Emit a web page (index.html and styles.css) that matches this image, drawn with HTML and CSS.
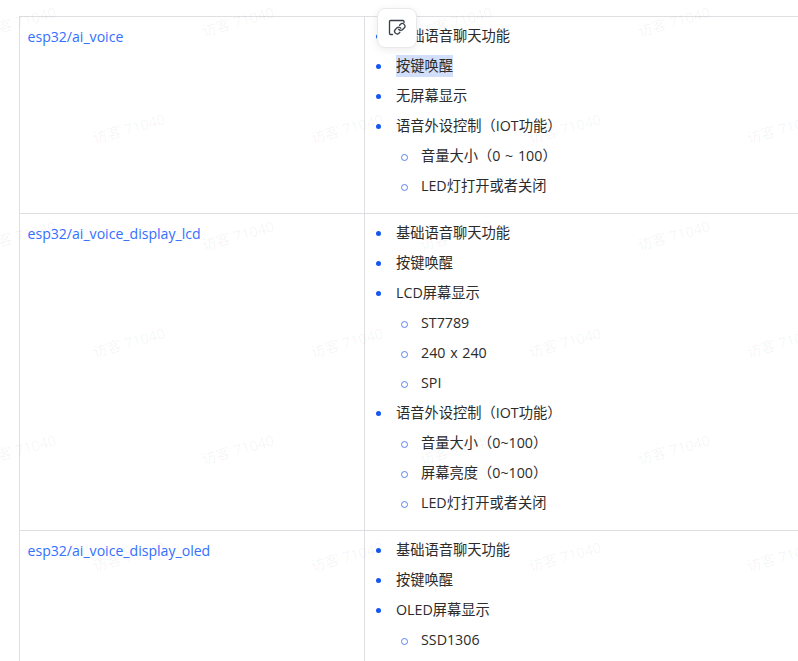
FILE: index.html
```html
<!DOCTYPE html>
<html lang="zh">
<head>
<meta charset="utf-8">
<title>开发板配置</title>
<link rel="stylesheet" href="styles.css">
</head>
<body>
<main class="page">
  <table class="boards">
    <colgroup><col class="col-name"><col class="col-desc"></colgroup>
    <tbody>
      <tr>
        <td class="name"><a href="#">esp32/ai_voice</a></td>
        <td>
          <ul>
            <li>基础语音聊天功能</li>
            <li><span class="selected">按键唤醒</span></li>
            <li>无屏幕显示</li>
            <li>语音外设控制（IOT功能）
              <ul>
                <li>音量大小（0 ~ 100）</li>
                <li>LED灯打开或者关闭</li>
              </ul>
            </li>
          </ul>
        </td>
      </tr>
      <tr>
        <td class="name"><a href="#">esp32/ai_voice_display_lcd</a></td>
        <td>
          <ul>
            <li>基础语音聊天功能</li>
            <li>按键唤醒</li>
            <li>LCD屏幕显示
              <ul>
                <li>ST7789</li>
                <li>240 x 240</li>
                <li>SPI</li>
              </ul>
            </li>
            <li>语音外设控制（IOT功能）
              <ul>
                <li>音量大小（0~100）</li>
                <li>屏幕亮度（0~100）</li>
                <li>LED灯打开或者关闭</li>
              </ul>
            </li>
          </ul>
        </td>
      </tr>
      <tr>
        <td class="name"><a href="#">esp32/ai_voice_display_oled</a></td>
        <td>
          <ul>
            <li>基础语音聊天功能</li>
            <li>按键唤醒</li>
            <li>OLED屏幕显示
              <ul>
                <li>SSD1306</li>
                <li>128 x 64</li>
              </ul>
            </li>
          </ul>
        </td>
      </tr>
    </tbody>
  </table>
</main>

<button class="link-btn" type="button" aria-label="复制链接">
  <svg viewBox="0 0 18 18" width="18" height="18" fill="none" stroke="#3a3f47" stroke-width="1.3" stroke-linecap="round" stroke-linejoin="round">
    <path d="M4.5 15.5H2.5a1 1 0 0 1-1-1V2.5a1 1 0 0 1 1-1h12.5a1 1 0 0 1 1 1V3.5"/>
    <g transform="translate(5.5 3.5) scale(.52)" stroke-width="2.5">
      <path d="M10 13a5 5 0 0 0 7.54.54l3-3a5 5 0 0 0-7.07-7.07l-1.72 1.71"/>
      <path d="M14 11a5 5 0 0 0-7.54-.54l-3 3a5 5 0 0 0 7.07 7.07l1.71-1.71"/>
    </g>
  </svg>
</button>

<div class="watermarks" aria-hidden="true">
  <div class="wm-row"><span>访客 71040</span><span>访客 71040</span><span>访客 71040</span><span>访客 71040</span></div>
  <div class="wm-row even"><span>访客 71040</span><span>访客 71040</span><span>访客 71040</span><span>访客 71040</span></div>
  <div class="wm-row"><span>访客 71040</span><span>访客 71040</span><span>访客 71040</span><span>访客 71040</span></div>
  <div class="wm-row even"><span>访客 71040</span><span>访客 71040</span><span>访客 71040</span><span>访客 71040</span></div>
  <div class="wm-row"><span>访客 71040</span><span>访客 71040</span><span>访客 71040</span><span>访客 71040</span></div>
  <div class="wm-row even"><span>访客 71040</span><span>访客 71040</span><span>访客 71040</span><span>访客 71040</span></div>
</div>
</body>
</html>
```

FILE: styles.css
```css
* { box-sizing: border-box; }

html, body {
  margin: 0;
  height: 100%;
  overflow: hidden;
  background: #fff;
}

body {
  position: relative;
  font-family: "Open Sans", "Noto Sans CJK SC", sans-serif;
  font-size: 14px;
  line-height: 22px;
  color: #2b2b2b;
  text-spacing-trim: space-all;
}

.page {
  padding: 16px 0 0 19px;
}

.boards {
  width: 900px;
  table-layout: fixed;
  border-collapse: collapse;
  border-top: 1px solid #dfdfe3;
  border-left: 1px solid #dfdfe3;
}

.col-name { width: 345px; }

.boards td {
  padding: 8px;
  vertical-align: top;
  border-right: 1px solid #dfdfe3;
  border-bottom: 1px solid #dfdfe3;
}

.boards .name {
  padding: 9px 8px 7px 7.5px;
  font-size: 14.1px;
}

.boards a {
  color: #3370ff;
  text-decoration: none;
}

ul {
  list-style: none;
  margin: 0;
  padding: 0 0 0 23px;
  font-size: 14.25px;
  word-spacing: 1px;
}

li {
  position: relative;
  margin-bottom: 8px;
}

li::before {
  content: "";
  position: absolute;
  left: -20px;
  top: 9px;
  width: 5px;
  height: 5px;
  border-radius: 50%;
  background: #1456f0;
}

li ul {
  margin-top: 8px;
  padding-left: 25px;
}

li li:last-child { margin-bottom: 0; }

li li::before {
  left: -20px;
  background: none;
  border: 1px solid #5b83f2;
}

.selected {
  display: inline-block;
  vertical-align: top;
  background: #d2dffa;
}

.link-btn {
  position: absolute;
  left: 377px;
  top: 8px;
  width: 40px;
  height: 40px;
  display: flex;
  align-items: center;
  justify-content: center;
  padding: 0;
  background: #fff;
  border: 1px solid #e9e9ec;
  border-radius: 8px;
  box-shadow: 0 2px 8px rgba(0, 0, 0, .08);
}

.watermarks {
  position: absolute;
  inset: 0;
  overflow: hidden;
  pointer-events: none;
  display: flex;
  flex-direction: column;
  padding-top: 10px;
  gap: 83px;
}

.wm-row {
  display: flex;
  margin-left: -89px;
  height: 24px;
}

.wm-row.even { margin-left: 20px; }

.wm-row span {
  flex: 0 0 218px;
  text-align: center;
  font-size: 14.5px;
  line-height: 24px;
  color: rgba(0, 0, 0, .05);
  transform: rotate(-15deg);
}
```
